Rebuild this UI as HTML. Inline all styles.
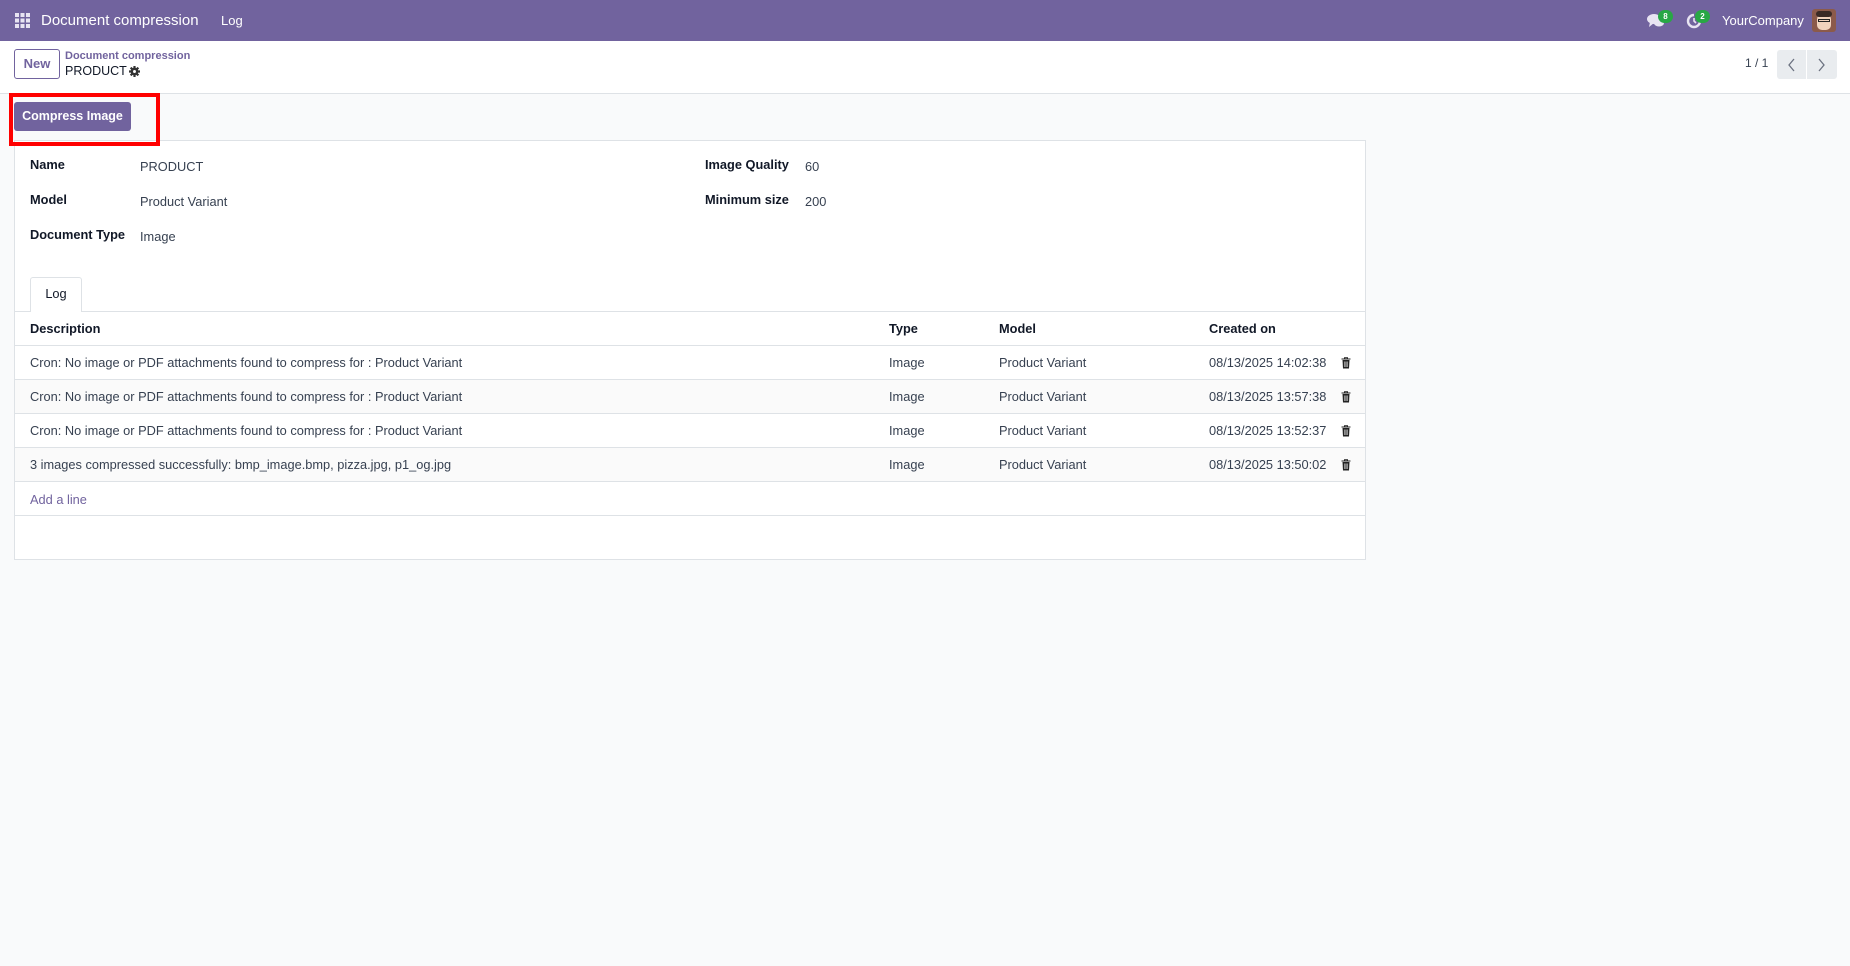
<!DOCTYPE html>
<html><head><meta charset="utf-8"><style>
*{box-sizing:border-box;margin:0;padding:0}
body{width:1850px;height:966px;background:#f9fafb;font-family:"Liberation Sans",sans-serif;font-size:12.8px;color:#374151;position:relative;overflow:hidden}
.abs{position:absolute}
.nav{left:0;top:0;width:1850px;height:41px;background:#71639e;color:#fff}
.cp{left:0;top:41px;width:1850px;height:53px;background:#fff;border-bottom:1px solid #dee2e6}
.sheet{left:14px;top:140px;width:1352px;height:420px;background:#fff;border:1px solid #dee2e6}
.lbl{font-weight:bold;color:#111827;font-size:12.8px}
.row{left:0;width:1350px;height:34px;border-top:1px solid #dee2e6}
.row span{position:absolute;top:9px}
.badge{background:#28a745;color:#fff;font-size:8px;font-weight:bold;border-radius:8px;width:15px;height:13px;text-align:center;line-height:13px}
</style></head><body>
<div class="abs nav">
  <svg class="abs" style="left:15px;top:13px" width="15" height="15" viewBox="0 0 15 15" fill="#e8e4f2"><rect x="0" y="0" width="4" height="4"/><rect x="5.5" y="0" width="4" height="4"/><rect x="11" y="0" width="4" height="4"/><rect x="0" y="5.5" width="4" height="4"/><rect x="5.5" y="5.5" width="4" height="4"/><rect x="11" y="5.5" width="4" height="4"/><rect x="0" y="11" width="4" height="4"/><rect x="5.5" y="11" width="4" height="4"/><rect x="11" y="11" width="4" height="4"/></svg>
  <div class="abs" style="left:41px;top:12px;font-size:15px">Document compression</div>
  <div class="abs" style="left:221px;top:13px;font-size:13px">Log</div>
  <svg class="abs" style="left:1647px;top:13px" width="18" height="16" viewBox="0 0 18 16" fill="#e8e4f2"><ellipse cx="7" cy="6" rx="7" ry="5"/><path d="M3 9 L2 14 L7 10Z"/><ellipse cx="12" cy="10" rx="5" ry="3.5"/></svg>
  <div class="abs badge" style="left:1658px;top:10px">8</div>
  <svg class="abs" style="left:1686px;top:13px" width="16" height="16" viewBox="0 0 16 16"><path d="M8 2 A6 6 0 1 0 14 8" fill="none" stroke="#e8e4f2" stroke-width="2.4"/><path d="M8 5 V8 L10 10" fill="none" stroke="#e8e4f2" stroke-width="1.6"/></svg>
  <div class="abs badge" style="left:1695px;top:10px">2</div>
  <div class="abs" style="left:1722px;top:13px;font-size:13px">YourCompany</div>
  <div class="abs" style="left:1812px;top:9px;width:24px;height:23px;background:#8b5a4a;border-radius:3px;overflow:hidden">
    <div class="abs" style="left:5px;top:5px;width:14px;height:16px;background:#f1d3bd;border-radius:5px"></div>
    <div class="abs" style="left:4px;top:2px;width:16px;height:6px;background:#3a2a25;border-radius:3px"></div>
    <div class="abs" style="left:6px;top:10px;width:12px;height:3px;border:1px solid #222"></div>
  </div>
</div>
<div class="abs cp">
  <div class="abs" style="left:14px;top:8px;width:46px;height:30px;border:1px solid #71639e;border-radius:3px;color:#71639e;font-weight:bold;text-align:center;line-height:28px;font-size:13px">New</div>
  <div class="abs" style="left:65px;top:9px;font-size:11px;font-weight:bold;color:#71639e">Document compression</div>
  <div class="abs" style="left:65px;top:23px;font-size:12.5px;color:#111827">PRODUCT</div>
  <svg class="abs" style="left:129px;top:25px" width="11" height="11" viewBox="0 0 12 12"><circle cx="6" cy="6" r="4.2" fill="#333"/><g stroke="#333" stroke-width="2.4"><path d="M6 0V12M0 6H12M1.8 1.8L10.2 10.2M10.2 1.8L1.8 10.2"/></g><circle cx="6" cy="6" r="1.6" fill="#fff"/></svg>
  <div class="abs" style="left:1745px;top:15px;font-size:12px;color:#374151">1 / 1</div>
  <div class="abs" style="left:1777px;top:9px;width:60px;height:29px;background:#e9ecef;border-radius:3px"></div>
  <div class="abs" style="left:1806px;top:9px;width:1px;height:29px;background:#fff"></div>
  <svg class="abs" style="left:1787px;top:17px" width="10" height="14" viewBox="0 0 10 14"><path d="M7 1 L2 7 L7 13" fill="none" stroke="#6b7280" stroke-width="1.3"/></svg>
  <svg class="abs" style="left:1816px;top:17px" width="10" height="14" viewBox="0 0 10 14"><path d="M3 1 L8 7 L3 13" fill="none" stroke="#6b7280" stroke-width="1.3"/></svg>
</div>
<div class="abs" style="left:14px;top:102px;width:117px;height:29px;background:#71639e;border-radius:3px;color:#fff;font-weight:bold;text-align:center;line-height:29px;font-size:12.5px">Compress Image</div>
<div class="abs sheet">
  <div class="abs lbl" style="left:15px;top:16px">Name</div>
  <div class="abs" style="left:125px;top:18px">PRODUCT</div>
  <div class="abs lbl" style="left:15px;top:51px">Model</div>
  <div class="abs" style="left:125px;top:53px">Product Variant</div>
  <div class="abs lbl" style="left:15px;top:86px">Document Type</div>
  <div class="abs" style="left:125px;top:88px">Image</div>
  <div class="abs lbl" style="left:690px;top:16px">Image Quality</div>
  <div class="abs" style="left:790px;top:18px">60</div>
  <div class="abs lbl" style="left:690px;top:51px">Minimum size</div>
  <div class="abs" style="left:790px;top:53px">200</div>
  <div class="abs" style="left:15px;top:136px;width:52px;height:35px;background:#fff;border:1px solid #dee2e6;border-bottom:none;border-radius:3px 3px 0 0;text-align:center;line-height:32px;color:#111827;z-index:2">Log</div>
  <div class="abs row" style="top:170px;font-weight:bold;color:#111827"><span style="left:15px">Description</span><span style="left:874px">Type</span><span style="left:984px">Model</span><span style="left:1194px">Created on</span></div>
  <div class="abs row" style="top:204px"><span style="left:15px">Cron: No image or PDF attachments found to compress for : Product Variant</span><span style="left:874px">Image</span><span style="left:984px">Product Variant</span><span style="left:1194px">08/13/2025 14:02:38</span></div>
  <div class="abs row" style="top:238px;background:#fafafa"><span style="left:15px">Cron: No image or PDF attachments found to compress for : Product Variant</span><span style="left:874px">Image</span><span style="left:984px">Product Variant</span><span style="left:1194px">08/13/2025 13:57:38</span></div>
  <div class="abs row" style="top:272px"><span style="left:15px">Cron: No image or PDF attachments found to compress for : Product Variant</span><span style="left:874px">Image</span><span style="left:984px">Product Variant</span><span style="left:1194px">08/13/2025 13:52:37</span></div>
  <div class="abs row" style="top:306px;background:#fafafa"><span style="left:15px">3 images compressed successfully: bmp_image.bmp, pizza.jpg, p1_og.jpg</span><span style="left:874px">Image</span><span style="left:984px">Product Variant</span><span style="left:1194px">08/13/2025 13:50:02</span></div>
  <div class="abs row" style="top:340px;height:35px;border-bottom:1px solid #dee2e6"><span style="left:15px;color:#71639e;top:10px">Add a line</span></div>
  <svg class="abs" style="left:1326px;top:216px" width="10" height="12" viewBox="0 0 10 12"><path d="M0.5 2H9.5M3.5 2V0.7H6.5V2" stroke="#222" fill="none"/><path d="M1.5 3H8.5L8 11.5H2Z" fill="#222"/><path d="M3.8 4.5V10M5 4.5V10M6.2 4.5V10" stroke="#fff" stroke-width="0.6"/></svg>
  <svg class="abs" style="left:1326px;top:250px" width="10" height="12" viewBox="0 0 10 12"><path d="M0.5 2H9.5M3.5 2V0.7H6.5V2" stroke="#222" fill="none"/><path d="M1.5 3H8.5L8 11.5H2Z" fill="#222"/><path d="M3.8 4.5V10M5 4.5V10M6.2 4.5V10" stroke="#fff" stroke-width="0.6"/></svg>
  <svg class="abs" style="left:1326px;top:284px" width="10" height="12" viewBox="0 0 10 12"><path d="M0.5 2H9.5M3.5 2V0.7H6.5V2" stroke="#222" fill="none"/><path d="M1.5 3H8.5L8 11.5H2Z" fill="#222"/><path d="M3.8 4.5V10M5 4.5V10M6.2 4.5V10" stroke="#fff" stroke-width="0.6"/></svg>
  <svg class="abs" style="left:1326px;top:318px" width="10" height="12" viewBox="0 0 10 12"><path d="M0.5 2H9.5M3.5 2V0.7H6.5V2" stroke="#222" fill="none"/><path d="M1.5 3H8.5L8 11.5H2Z" fill="#222"/><path d="M3.8 4.5V10M5 4.5V10M6.2 4.5V10" stroke="#fff" stroke-width="0.6"/></svg>
</div>
<div class="abs" style="left:9px;top:93px;width:151px;height:53px;border:4px solid #ff0000;z-index:5"></div>
</body></html>
